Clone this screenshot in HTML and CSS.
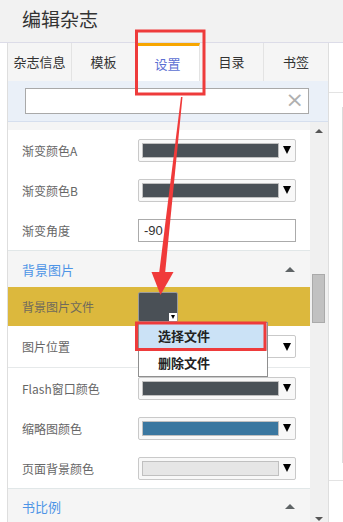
FILE: index.html
```html
<!DOCTYPE html>
<html lang="zh">
  <head>
    <meta charset="UTF-8" />
    <meta name="viewport" content="width=device-width, initial-scale=1.0" />
    <title>编辑杂志</title>
    <link rel="stylesheet" href="styles.css">
  </head>
  <body>
    <div class="header">
      <h1>编辑杂志</h1>
    </div>
    <div class="main">
      <div class="panel">
        <div class="tabs">
          <div class="tab">杂志信息</div>
          <div class="tab">模板</div>
          <div class="tab active">设置</div>
          <div class="tab">目录</div>
          <div class="tab">书签</div>
        </div>
        <div class="search">
          <div class="search-box">
            <span class="clear">&times;</span>
          </div>
        </div>
        <div class="scroller">
          <div class="content">
            <div class="strip"></div>

            <div class="row">
              <label>渐变颜色A</label>
              <div class="color-select"><span class="swatch dark"></span><span class="caret"></span></div>
            </div>
            <div class="row">
              <label>渐变颜色B</label>
              <div class="color-select"><span class="swatch dark"></span><span class="caret"></span></div>
            </div>
            <div class="row">
              <label>渐变角度</label>
              <div class="text-input">-90</div>
            </div>

            <div class="section">
              <span>背景图片</span>
              <span class="collapse"></span>
            </div>
            <div class="row highlight">
              <label>背景图片文件</label>
              <div class="file-btn"><span class="mini-caret"></span></div>
            </div>
            <div class="row tall">
              <label>图片位置</label>
              <div class="color-select plain"><span class="caret"></span></div>
            </div>

            <div class="row divided">
              <label>Flash窗口颜色</label>
              <div class="color-select"><span class="swatch dark"></span><span class="caret"></span></div>
            </div>
            <div class="row">
              <label>缩略图颜色</label>
              <div class="color-select"><span class="swatch blue"></span><span class="caret"></span></div>
            </div>
            <div class="row">
              <label>页面背景颜色</label>
              <div class="color-select"><span class="swatch light"></span><span class="caret"></span></div>
            </div>

            <div class="section last">
              <span>书比例</span>
              <span class="collapse"></span>
            </div>

            <ul class="menu">
              <li class="selected">选择文件</li>
              <li>删除文件</li>
            </ul>
          </div>
          <div class="scrollbar">
            <span class="sb-up"></span>
            <span class="sb-thumb"></span>
            <span class="sb-down"></span>
          </div>
        </div>
      </div>
      <div class="side">
        <div class="side-frame">
          <div class="side-edge"></div>
        </div>
      </div>
    </div>

    <!-- annotation marks drawn over the screenshot -->
    <svg class="marks" width="343" height="522" viewBox="0 0 343 522">
      <rect x="136.5" y="31" width="67.5" height="63" fill="none" stroke="#ee3b3b" stroke-width="3" />
      <rect x="136.5" y="323" width="128.5" height="26.5" fill="none" stroke="#ee3b3b" stroke-width="3" />
      <polygon points="181,97 182.5,97 165,274 159,274" fill="#f03a3a" />
      <polygon points="151.5,272 173.5,272 160.5,295" fill="#f03a3a" />
    </svg>
  </body>
</html>
```

FILE: styles.css
```css
* {
  margin: 0;
  padding: 0;
  box-sizing: border-box;
}

body {
  width: 343px;
  height: 522px;
  overflow: hidden;
  position: relative;
  background: #fff;
  font-family: "Noto Sans CJK SC", "Liberation Sans", sans-serif;
  color: #333;
}

.header {
  height: 43px;
  background: #f2f2f2;
  border-bottom: 1px solid #dcdce8;
  padding-left: 22px;
}

.header h1 {
  font-size: 19px;
  font-weight: 400;
  line-height: 38px;
  color: #333;
}

.main {
  display: flex;
  height: 479px;
}

.panel {
  margin-left: 7px;
  width: 322px;
  border-left: 1px solid #dedede;
  border-right: 1px solid #dedede;
  display: flex;
  flex-direction: column;
}

/* tabs */
.tabs {
  display: flex;
  height: 38px;
  background: #f5f5f5;
}

.tab {
  width: 64px;
  font-size: 13px;
  line-height: 38px;
  text-align: center;
  color: #333;
  border-right: 1px solid #e3e3e3;
}

.tab:last-child {
  border-right: none;
}

.tab.active {
  background: #fff;
  border-top: 3px solid #f7a600;
  line-height: 35px;
  color: #5b6fd3;
}

/* search */
.search {
  height: 41px;
  background: #eaf0f8;
  padding: 7px 19px 0 17px;
  border-bottom: 1px solid #d6dfee;
}

.search-box {
  height: 26px;
  background: #fff;
  border: 1px solid #a9a9a9;
  position: relative;
}

.clear {
  position: absolute;
  right: 4px;
  top: -2px;
  font-size: 22px;
  line-height: 26px;
  color: #b0b0b0;
  font-family: "DejaVu Sans", sans-serif;
}

/* scroll region */
.scroller {
  flex: 1;
  display: flex;
  overflow: hidden;
}

.content {
  width: 302px;
  position: relative;
}

.strip {
  height: 8px;
  background: #f5f5f5;
}

.row {
  display: flex;
  align-items: center;
  height: 40px;
  padding-left: 14px;
}

.row label {
  width: 116px;
  font-size: 12px;
  color: #666;
}

.row.highlight {
  height: 39px;
  background: #dcb83d;
}

.row.highlight label {
  color: #6f6a5c;
}

.row.tall {
  height: 41px;
}

.row.divided {
  height: 41px;
  border-top: 1px solid #e6e9ea;
}

.color-select {
  width: 158px;
  height: 23px;
  display: flex;
  align-items: center;
  padding: 3px 0 3px 3px;
  background: #f8f8f8;
  border: 1px solid #c9c9c9;
  border-radius: 2px;
}

.color-select.plain {
  justify-content: flex-end;
  background: #fff;
}

.swatch {
  flex: 1;
  height: 100%;
  border: 1px solid #c0c0c0;
}

.swatch.dark {
  background: #4a5157;
}

.swatch.blue {
  background: #3a77a0;
}

.swatch.light {
  background: #e6e6e6;
}

.caret {
  width: 16px;
  display: flex;
  justify-content: center;
}

.caret::before {
  content: "";
  border-left: 4px solid transparent;
  border-right: 4px solid transparent;
  border-top: 8px solid #000;
}

.text-input {
  width: 158px;
  height: 23px;
  border: 1px solid #ababab;
  font-family: "Liberation Sans", sans-serif;
  font-size: 13px;
  line-height: 21px;
  padding-left: 5px;
  color: #333;
}

.file-btn {
  width: 40px;
  height: 30px;
  margin-top: 1px;
  background: #4a5056;
  border: 1px solid #9c9c9c;
  border-radius: 2px;
  position: relative;
}

.mini-caret {
  position: absolute;
  right: 0;
  bottom: 0;
  width: 8px;
  height: 8px;
  background: #fff;
  display: flex;
  align-items: center;
  justify-content: center;
}

.mini-caret::before {
  content: "";
  border-left: 2.5px solid transparent;
  border-right: 2.5px solid transparent;
  border-top: 4px solid #000;
}

/* section headers */
.section {
  height: 37px;
  background: #f5f5f5;
  border-top: 1px solid #e1e7e8;
  display: flex;
  align-items: center;
  justify-content: space-between;
  padding: 0 15px 0 14px;
  font-size: 13px;
  color: #4d94e6;
}

.section.last {
  height: 40px;
  align-items: flex-start;
  padding-top: 8px;
}

.collapse {
  border-left: 5px solid transparent;
  border-right: 5px solid transparent;
  border-bottom: 5px solid #5f6466;
}

.section.last .collapse {
  margin-top: 7px;
}

/* dropdown menu */
.menu {
  position: absolute;
  left: 130px;
  top: 200px;
  width: 130px;
  list-style: none;
  background: #fff;
  border: 1px solid #8f8f8f;
}

.menu li {
  height: 26px;
  padding-left: 19px;
  font-size: 13px;
  font-weight: 700;
  line-height: 26px;
  color: #222;
}

.menu li.selected {
  height: 27px;
  background: #cbe2f6;
}

/* scrollbar */
.scrollbar {
  width: 18px;
  background: #f0f0f0;
  position: relative;
}

.sb-up,
.sb-down {
  position: absolute;
  left: 5px;
  border-left: 4px solid transparent;
  border-right: 4px solid transparent;
}

.sb-up {
  top: 7px;
  border-bottom: 4px solid #555;
}

.sb-down {
  bottom: 1px;
  border-top: 4px solid #555;
}

.sb-thumb {
  position: absolute;
  left: 2px;
  top: 152px;
  width: 13px;
  height: 49px;
  background: #c1c1c1;
  border: 1px solid #aaa;
}

/* right side */
.side {
  flex: 1;
  padding-top: 49px;
}

.side-frame {
  height: 389px;
  border-top: 1px solid #e3e3e3;
  border-bottom: 1px solid #e3e3e3;
  padding-top: 14px;
}

.side-edge {
  height: 356px;
  border-right: 1px solid #dcdcdc;
}

.marks {
  position: absolute;
  left: 0;
  top: 0;
  pointer-events: none;
}
```
